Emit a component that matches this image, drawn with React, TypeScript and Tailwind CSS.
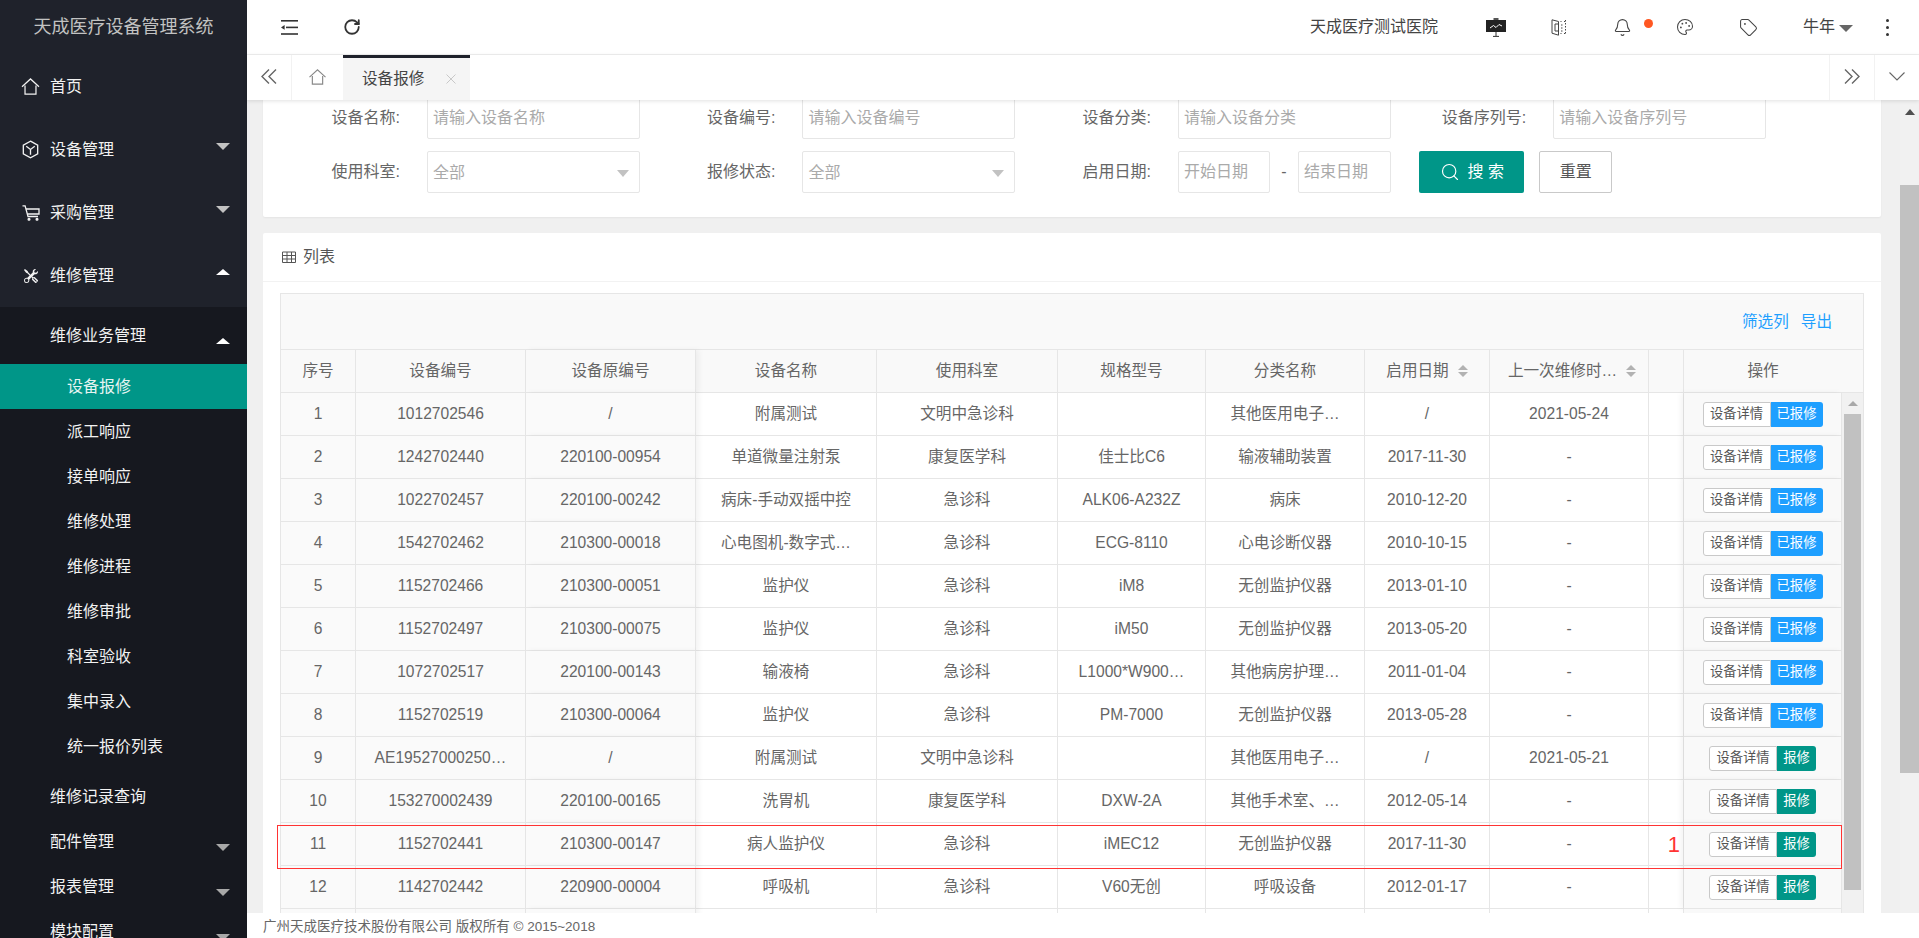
import { Bell, Palette, RotateCw, Search, Tag } from "lucide-react";
import { BsTools } from "react-icons/bs";

const SUB_ITEMS = ["设备报修", "派工响应", "接单响应", "维修处理", "维修进程", "维修审批", "科室验收", "集中录入", "统一报价列表"];

type Row = {
  id: string;
  no: string;
  oldNo: string;
  name: string;
  dept: string;
  model: string;
  type: string;
  date: string;
  last: string;
  done: boolean;
};

const ROWS: Row[] = [
  { id: "1", no: "1012702546", oldNo: "/", name: "附属测试", dept: "文明中急诊科", model: "", type: "其他医用电子…", date: "/", last: "2021-05-24", done: true },
  { id: "2", no: "1242702440", oldNo: "220100-00954", name: "单道微量注射泵", dept: "康复医学科", model: "佳士比C6", type: "输液辅助装置", date: "2017-11-30", last: "-", done: true },
  { id: "3", no: "1022702457", oldNo: "220100-00242", name: "病床-手动双摇中控", dept: "急诊科", model: "ALK06-A232Z", type: "病床", date: "2010-12-20", last: "-", done: true },
  { id: "4", no: "1542702462", oldNo: "210300-00018", name: "心电图机-数字式…", dept: "急诊科", model: "ECG-8110", type: "心电诊断仪器", date: "2010-10-15", last: "-", done: true },
  { id: "5", no: "1152702466", oldNo: "210300-00051", name: "监护仪", dept: "急诊科", model: "iM8", type: "无创监护仪器", date: "2013-01-10", last: "-", done: true },
  { id: "6", no: "1152702497", oldNo: "210300-00075", name: "监护仪", dept: "急诊科", model: "iM50", type: "无创监护仪器", date: "2013-05-20", last: "-", done: true },
  { id: "7", no: "1072702517", oldNo: "220100-00143", name: "输液椅", dept: "急诊科", model: "L1000*W900…", type: "其他病房护理…", date: "2011-01-04", last: "-", done: true },
  { id: "8", no: "1152702519", oldNo: "210300-00064", name: "监护仪", dept: "急诊科", model: "PM-7000", type: "无创监护仪器", date: "2013-05-28", last: "-", done: true },
  { id: "9", no: "AE19527000250…", oldNo: "/", name: "附属测试", dept: "文明中急诊科", model: "", type: "其他医用电子…", date: "/", last: "2021-05-21", done: false },
  { id: "10", no: "153270002439", oldNo: "220100-00165", name: "洗胃机", dept: "康复医学科", model: "DXW-2A", type: "其他手术室、…", date: "2012-05-14", last: "-", done: false },
  { id: "11", no: "1152702441", oldNo: "210300-00147", name: "病人监护仪", dept: "急诊科", model: "iMEC12", type: "无创监护仪器", date: "2017-11-30", last: "-", done: false },
  { id: "12", no: "1142702442", oldNo: "220900-00004", name: "呼吸机", dept: "急诊科", model: "V60无创", type: "呼吸设备", date: "2012-01-17", last: "-", done: false },
];

function Caret({ up, light }: { up?: boolean; light?: boolean }) {
  if (up) {
    return <span className="h-0 w-0 border-x-[7px] border-b-[6px] border-x-transparent border-b-white" />;
  }
  return <span className={`h-0 w-0 border-x-[7px] border-t-[7px] border-x-transparent ${light ? "border-t-[#c2c2c2]" : "border-t-[#a8a8a8]"}`} />;
}

function HomeIcon({ className }: { className: string }) {
  return (
    <svg viewBox="0 0 20 18" fill="none" stroke="currentColor" strokeWidth="1.3" className={className}>
      <path d="M1 9.2 10 1l9 8.2" />
      <path d="M4.2 8v9h11.6V8" />
    </svg>
  );
}

function BoxIcon() {
  return (
    <svg viewBox="0 0 18 20" fill="none" stroke="currentColor" strokeWidth="1.4" className="h-[19px] w-[17px]">
      <path d="M9 1.2 16.6 5.5v9L9 18.8 1.4 14.5v-9z" />
      <path d="M4.5 6.5 9 10l4.5-3.5M9 10v5.5" />
    </svg>
  );
}

function CartIcon() {
  return (
    <svg viewBox="0 0 18 16" fill="none" stroke="currentColor" strokeWidth="1.3" className="h-4 w-[18px]">
      <path d="M.5.8h2.6L6 11.5h10" />
      <path d="M4 4h13v5H5.5" />
      <circle cx="7" cy="14.3" r=".9" fill="currentColor" />
      <circle cx="15" cy="14.3" r=".9" fill="currentColor" />
    </svg>
  );
}

function OutdentIcon() {
  return (
    <svg viewBox="0 0 17 15" fill="#333" className="h-[15px] w-[17px]">
      <rect x="0" y="0" width="17" height="1.6" />
      <rect x="5" y="6.6" width="12" height="1.6" />
      <rect x="0" y="13.2" width="17" height="1.6" />
      <path d="M0 7.4 3.6 5v4.8z" />
    </svg>
  );
}

function BoardIcon() {
  return (
    <svg viewBox="0 0 20 19" className="h-[19px] w-5">
      <rect x="7.5" y="0" width="5" height="2" fill="#555" />
      <rect x="0" y="2" width="20" height="12" fill="#222" />
      <path d="M4 10 7.5 7.5l2.5 2 3-3 3 1.5" fill="none" stroke="#fff" strokeWidth="1" />
      <path d="M10 14v4M7 18.4h6" stroke="#333" strokeWidth="1" />
    </svg>
  );
}

function BookIcon() {
  return (
    <svg viewBox="0 0 16 17" fill="none" stroke="#444" strokeWidth="1" className="h-[17px] w-4">
      <path d="M7.5 2.5 1 .8v13.4l6.5 2z" />
      <path d="M4 5h3.5M4 12h3.5M4 5v7" />
      <path d="M9.5 2.5h1M13 2.5h1M14.5 1v15M9.5 14.5h1M13 14.5h1M10 6h1.5M10 9h1.5M10 12h1.5" strokeDasharray="1.5 1.5" />
    </svg>
  );
}

function ChevronPair({ left, className }: { left?: boolean; className: string }) {
  return (
    <svg viewBox="0 0 16 15" fill="none" stroke="currentColor" strokeWidth="1.4" className={className}>
      {left ? <path d="M8 .5 1 7.5l7 7M15 .5l-7 7 7 7" /> : <path d="M1 .5l7 7-7 7M8 .5l7 7-7 7" />}
    </svg>
  );
}

function GridIcon() {
  return (
    <svg viewBox="0 0 14 12" fill="none" stroke="#555" strokeWidth="1" className="h-3 w-[14px]">
      <path d="M.5 1h13v10.5H.5zM.5 4.5h13M.5 8h13M5 1v10.5M9.5 1v10.5" />
    </svg>
  );
}

function SortIcon() {
  return (
    <span className="ml-[9px] flex flex-col gap-[2px]">
      <span className="h-0 w-0 border-x-[5px] border-b-[5px] border-x-transparent border-b-[#b2b2b2]" />
      <span className="h-0 w-0 border-x-[5px] border-t-[5px] border-x-transparent border-t-[#b2b2b2]" />
    </span>
  );
}

function Sidebar() {
  return (
    <aside className="flex h-[938px] w-[247px] shrink-0 flex-col overflow-hidden bg-[#1f222b] text-[16px] text-[#f2f2f2]">
      <div className="flex h-[55px] shrink-0 items-center justify-center text-[18px] text-[#c2c2c2]">天成医疗设备管理系统</div>
      <div className="flex h-[63px] shrink-0 items-center">
        <span className="flex w-[50px] justify-center pl-[11px]"><HomeIcon className="h-[17px] w-[19px]" /></span>
        <span>首页</span>
      </div>
      <div className="flex h-[63px] shrink-0 items-center">
        <span className="flex w-[50px] justify-center pl-[11px]"><BoxIcon /></span>
        <span className="flex-1">设备管理</span>
        <span className="mr-[17px] mb-[7px] flex"><Caret light /></span>
      </div>
      <div className="flex h-[63px] shrink-0 items-center">
        <span className="flex w-[50px] justify-center pl-[11px]"><CartIcon /></span>
        <span className="flex-1">采购管理</span>
        <span className="mr-[17px] mb-[7px] flex"><Caret light /></span>
      </div>
      <div className="flex h-[63px] shrink-0 items-center">
        <span className="flex w-[50px] justify-center pl-[11px]"><BsTools className="h-[14px] w-[14px]" /></span>
        <span className="flex-1">维修管理</span>
        <span className="mr-[17px] mb-[7px] flex"><Caret up /></span>
      </div>
      <div className="flex-1 bg-[#16181f]">
        <div className="flex h-[57px] items-center pl-[50px]">
          <span className="flex-1">维修业务管理</span>
          <span className="mt-[10px] mr-[17px] flex"><Caret up /></span>
        </div>
        {SUB_ITEMS.map((item, i) => (
          <div key={item} className={`flex h-[45px] items-center pl-[67px] ${i === 0 ? "bg-[#009688] text-[#e6f4f2]" : ""}`}>
            {item}
          </div>
        ))}
        <div className="mt-[5px] flex h-[45px] items-center pl-[50px]">维修记录查询</div>
        {["配件管理", "报表管理", "模块配置"].map((item) => (
          <div key={item} className="flex h-[45px] items-center pl-[50px]">
            <span className="flex-1">{item}</span>
            <span className="mt-[11px] mr-[17px] flex"><Caret /></span>
          </div>
        ))}
      </div>
    </aside>
  );
}

function Header() {
  return (
    <header className="flex h-[55px] shrink-0 items-center border-b border-[#f0f0f0] bg-white text-[16px] text-[#444]">
      <span className="ml-[34px] flex"><OutdentIcon /></span>
      <RotateCw className="ml-[45px] h-[18px] w-[18px] text-[#333]" strokeWidth={2.4} />
      <span className="flex-1" />
      <span className="mr-[27px]">天成医疗测试医院</span>
      <span className="flex w-[63px] justify-center"><BoardIcon /></span>
      <span className="flex w-[63px] justify-center"><BookIcon /></span>
      <span className="relative flex w-[63px] justify-center">
        <Bell className="h-[19px] w-[19px] text-[#444]" strokeWidth={1.4} />
        <span className="absolute top-[1px] left-[53px] h-[9px] w-[9px] rounded-full bg-[#ff5722]" />
      </span>
      <span className="flex w-[63px] justify-center"><Palette className="h-[18px] w-[18px] text-[#444]" strokeWidth={1.4} /></span>
      <span className="flex w-[63px] justify-center"><Tag className="h-[19px] w-[19px] text-[#444]" strokeWidth={1.3} /></span>
      <span className="ml-[23px] flex items-center">
        牛年
        <span className="mt-[2px] ml-[4px] h-0 w-0 border-x-[7px] border-t-[7px] border-x-transparent border-t-[#666]" />
      </span>
      <span className="mr-[30px] ml-[33px] flex flex-col gap-[4px]">
        <span className="h-[3px] w-[3px] rounded-full bg-[#333]" />
        <span className="h-[3px] w-[3px] rounded-full bg-[#333]" />
        <span className="h-[3px] w-[3px] rounded-full bg-[#333]" />
      </span>
    </header>
  );
}

function TabBar() {
  return (
    <div className="relative z-10 flex h-[45px] shrink-0 bg-white text-[#666] shadow-[0_1px_4px_rgba(0,0,0,0.12)]">
      <div className="flex w-[45px] items-center justify-center border-r border-[#f2f2f2] pb-[2px]">
        <ChevronPair left className="h-[15px] w-4" />
      </div>
      <div className="flex w-[51px] items-center justify-center pb-[2px] text-[#888]">
        <HomeIcon className="h-[16px] w-[19px]" />
      </div>
      <div className="flex w-[127px] items-center justify-between border-t-[3px] border-[#1f222b] bg-[#f5f5f5] pr-[14px] pl-[19px] text-[15.6px] text-[#444]">
        <span>设备报修</span>
        <svg viewBox="0 0 10 10" stroke="#c8c8c8" strokeWidth="1" className="h-[10px] w-[10px]">
          <path d="M.5.5l9 9M9.5.5l-9 9" />
        </svg>
      </div>
      <div className="flex-1" />
      <div className="flex w-[45px] items-center justify-center border-l border-[#f2f2f2] pb-[2px]">
        <ChevronPair className="h-[15px] w-4" />
      </div>
      <div className="flex w-[45px] items-center justify-center border-l border-[#f2f2f2] pb-[2px]">
        <svg viewBox="0 0 16 9" fill="none" stroke="#666" strokeWidth="1.1" className="h-[9px] w-4">
          <path d="M.5.5 8 8l7.5-7.5" />
        </svg>
      </div>
    </div>
  );
}

function Field({ label, children }: { label: string; children: React.ReactNode }) {
  return (
    <div className="flex w-[350px] items-center">
      <span className="mr-[27px] w-[110px] text-right text-[#666]">{label}:</span>
      {children}
    </div>
  );
}

function TextInput({ placeholder }: { placeholder: string }) {
  return (
    <div className="flex h-[42px] w-[213px] items-center rounded-[2px] border border-[#e6e6e6] pl-[5px] text-[#aaa]">{placeholder}</div>
  );
}

function SelectInput() {
  return (
    <div className="flex h-[42px] w-[213px] items-center justify-between rounded-[2px] border border-[#e6e6e6] pt-[2px] pr-[10px] pl-[5px] text-[#aaa]">
      全部
      <span className="h-0 w-0 border-x-[6px] border-t-[7px] border-x-transparent border-t-[#c2c2c2]" />
    </div>
  );
}

function FilterCard() {
  return (
    <section className="flex flex-col gap-[12px] rounded-b-[2px] bg-white pb-[24px] pl-[27px] text-[16px] shadow-[0_1px_2px_rgba(0,0,0,0.05)]">
      <div className="flex gap-[25.45px]">
        <Field label="设备名称"><TextInput placeholder="请输入设备名称" /></Field>
        <Field label="设备编号"><TextInput placeholder="请输入设备编号" /></Field>
        <Field label="设备分类"><TextInput placeholder="请输入设备分类" /></Field>
        <Field label="设备序列号"><TextInput placeholder="请输入设备序列号" /></Field>
      </div>
      <div className="flex gap-[25.45px]">
        <Field label="使用科室"><SelectInput /></Field>
        <Field label="报修状态"><SelectInput /></Field>
        <Field label="启用日期">
          <div className="flex h-[42px] w-[92px] items-center rounded-[2px] border border-[#e6e6e6] pl-[5px] text-[#aaa]">开始日期</div>
          <span className="w-[28px] text-center text-[#666]">-</span>
          <div className="flex h-[42px] w-[93px] items-center rounded-[2px] border border-[#e6e6e6] pl-[5px] text-[#aaa]">结束日期</div>
        </Field>
        <div className="ml-[3px] flex gap-[15px]">
          <div className="flex h-[42px] w-[105px] items-center justify-center gap-[8px] rounded-[2px] bg-[#009688] text-white">
            <Search className="h-[20px] w-[20px]" strokeWidth={1.4} />
            搜 索
          </div>
          <div className="flex h-[42px] w-[73px] items-center justify-center rounded-[2px] border border-[#c9c9c9] text-[#555]">重置</div>
        </div>
      </div>
    </section>
  );
}

function RowActions({ done }: { done: boolean }) {
  return (
    <div className="flex justify-center text-[13.3px]">
      <span className="flex h-[25px] w-[68px] items-center justify-center rounded-l-[3px] border border-[#c9c9c9] bg-white text-[#555]">设备详情</span>
      {done ? (
        <span className="flex h-[25px] w-[52px] items-center justify-center rounded-r-[3px] bg-[#1e9fff] text-white">已报修</span>
      ) : (
        <span className="flex h-[25px] w-[39px] items-center justify-center rounded-r-[3px] bg-[#009688] text-white">报修</span>
      )}
    </div>
  );
}

function TableColumns({ lastWide }: { lastWide: boolean }) {
  return (
    <colgroup>
      <col className="w-[75px]" />
      <col className="w-[170px]" />
      <col className="w-[170px]" />
      <col className="w-[181px]" />
      <col className="w-[181px]" />
      <col className="w-[148px]" />
      <col className="w-[159px]" />
      <col className="w-[125px]" />
      <col className="w-[159px]" />
      <col className="w-[35px]" />
      <col className={lastWide ? "w-[179px]" : "w-[158px]"} />
    </colgroup>
  );
}

const headCell = "h-[43px] border-r border-b border-[#e6e6e6] p-0 text-center font-normal";
const bodyCell = "h-[43px] border-r border-b border-[#e6e6e6] p-0 text-center whitespace-nowrap";
const pinnedLeft = "bg-[#fafafa]";
const pinnedEdge = "relative z-10 bg-[#fafafa] shadow-[3px_0_6px_rgba(0,0,0,0.05)]";

function DataTable() {
  return (
    <div className="mx-[17px] mt-[11px] w-[1584px] border border-[#e6e6e6] bg-white text-[15.6px] text-[#666]">
      <div className="flex h-[56px] items-center justify-end gap-[12px] border-b border-[#e6e6e6] bg-[#f9f9f9] pr-[31px] text-[#1e9fff]">
        <span>筛选列</span>
        <span>导出</span>
      </div>
      <table className="w-[1582px] table-fixed border-separate border-spacing-0 bg-[#f9f9f9]">
        <TableColumns lastWide />
        <thead>
          <tr>
            <th className={headCell}>序号</th>
            <th className={headCell}>设备编号</th>
            <th className={`${headCell} relative z-10 shadow-[3px_0_6px_rgba(0,0,0,0.05)]`}>设备原编号</th>
            <th className={headCell}>设备名称</th>
            <th className={headCell}>使用科室</th>
            <th className={headCell}>规格型号</th>
            <th className={headCell}>分类名称</th>
            <th className={headCell}>
              <span className="flex items-center justify-center">启用日期<SortIcon /></span>
            </th>
            <th className={headCell}>
              <span className="ml-[6px] flex items-center justify-center">上一次维修时…<SortIcon /></span>
            </th>
            <th className={headCell} />
            <th className="h-[43px] border-b border-[#e6e6e6] p-0 pr-[21px] text-center font-normal">操作</th>
          </tr>
        </thead>
      </table>
      <div className="relative flex">
        <table className="w-[1561px] table-fixed border-separate border-spacing-0 bg-white">
          <TableColumns lastWide={false} />
          <tbody>
            {ROWS.map((row) => (
              <tr key={row.id}>
                <td className={`${bodyCell} ${pinnedLeft}`}>{row.id}</td>
                <td className={`${bodyCell} ${pinnedLeft}`}>{row.no}</td>
                <td className={`${bodyCell} ${pinnedEdge}`}>{row.oldNo}</td>
                <td className={bodyCell}>{row.name}</td>
                <td className={bodyCell}>{row.dept}</td>
                <td className={bodyCell}>{row.model}</td>
                <td className={bodyCell}>{row.type}</td>
                <td className={bodyCell}>{row.date}</td>
                <td className={bodyCell}>{row.last}</td>
                <td className={`${bodyCell} pr-[3px] text-right text-[22px] text-[#ff3333]`}>{row.id === "11" ? "1" : ""}</td>
                <td className={`${bodyCell} bg-[#f9f9f9] shadow-[-3px_0_6px_rgba(0,0,0,0.05)]`}>
                  <RowActions done={row.done} />
                </td>
              </tr>
            ))}
            <tr>
              <td className={`${bodyCell} ${pinnedLeft}`} />
              <td className={`${bodyCell} ${pinnedLeft}`} />
              <td className={`${bodyCell} ${pinnedEdge}`} />
              <td className={bodyCell} />
              <td className={bodyCell} />
              <td className={bodyCell} />
              <td className={bodyCell} />
              <td className={bodyCell} />
              <td className={bodyCell} />
              <td className={bodyCell} />
              <td className={`${bodyCell} bg-[#f9f9f9]`} />
            </tr>
          </tbody>
        </table>
        <div className="flex w-[21px] flex-col items-center bg-[#f1f1f1]">
          <div className="flex h-[21px] items-center justify-center">
            <span className="h-0 w-0 border-x-[5px] border-b-[5px] border-x-transparent border-b-[#a8a8a8]" />
          </div>
          <div className="h-[476px] w-[17px] bg-[#c1c1c1]" />
        </div>
        <div className="absolute top-[432px] left-[-4px] z-20 h-[44px] w-[1565px] border border-[#f33]" />
      </div>
    </div>
  );
}

function ListCard() {
  return (
    <section className="mt-[16px] rounded-t-[2px] bg-white pb-[40px] text-[16px]">
      <div className="flex h-[49px] items-center gap-[7px] border-b border-[#f2f2f2] pl-[19px] text-[#555]">
        <GridIcon />
        列表
      </div>
      <DataTable />
    </section>
  );
}

export default function App() {
  return (
    <div className="flex h-[938px] w-full overflow-hidden bg-[#f0f0f0] font-['Liberation_Sans','Noto_Sans_CJK_SC',sans-serif]">
      <Sidebar />
      <div className="flex min-w-0 flex-1 flex-col">
        <Header />
        <TabBar />
        <div className="flex min-h-0 flex-1 overflow-hidden">
          <main className="mt-[-3px] ml-[16px] w-[1618px] shrink-0">
            <FilterCard />
            <ListCard />
          </main>
          <div className="ml-[19px] flex w-[19px] shrink-0 flex-col items-center bg-[#f1f1f1]">
            <div className="flex h-[85px] w-full justify-center pt-[9px]">
              <span className="h-0 w-0 border-x-[5px] border-b-[6px] border-x-transparent border-b-[#505050]" />
            </div>
            <div className="h-[588px] w-full shrink-0 bg-[#c1c1c1]" />
          </div>
        </div>
        <footer className="flex h-[25px] shrink-0 items-center bg-white pt-[4px] pl-[16px] text-[13.5px] text-[#666]">
          广州天成医疗技术股份有限公司 版权所有 © 2015~2018
        </footer>
      </div>
    </div>
  );
}
